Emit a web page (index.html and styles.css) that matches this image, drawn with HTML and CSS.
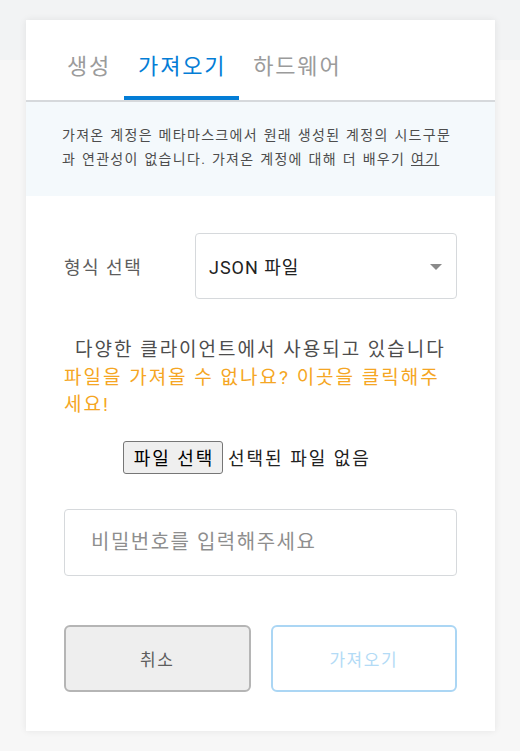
FILE: index.html
```html
<!DOCTYPE html>
<html lang="ko">
<head>
<meta charset="utf-8">
<title>계정 가져오기</title>
<link rel="stylesheet" href="styles.css">
</head>
<body>
<main class="card">
  <nav class="tabs">
    <div class="tab">생성</div>
    <div class="tab tab-active">가져오기</div>
    <div class="tab">하드웨어</div>
  </nav>
  <div class="notice">가져온 계정은 메타마스크에서 원래 생성된 계정의 시드구문과 연관성이 없습니다. 가져온 계정에 대해 더 배우기 <a class="notice-link" href="#">여기</a></div>
  <div class="form">
    <div class="select-row">
      <span class="select-label">형식 선택</span>
      <div class="select">
        <span class="select-value">JSON 파일</span>
        <span class="select-arrow"></span>
      </div>
    </div>
    <p class="info"><span class="info-text">다양한 클라이언트에서 사용되고 있습니다</span> <a class="info-link" href="#">파일을 가져올 수 없나요? 이곳을 클릭해주세요!</a></p>
    <div class="file-row">
      <button class="file-btn" type="button">파일 선택</button>
      <span class="file-name">선택된 파일 없음</span>
    </div>
    <input class="password" type="password" placeholder="비밀번호를 입력해주세요">
    <div class="actions">
      <button class="btn btn-cancel" type="button">취소</button>
      <button class="btn btn-import" type="button">가져오기</button>
    </div>
  </div>
</main>
</body>
</html>
```
FILE: styles.css
```css
html, body {
  margin: 0;
  padding: 0;
}
body {
  background: linear-gradient(#f2f3f4 0, #f2f3f4 60px, #f7f7f7 60px);
  min-height: 751px;
  font-family: Roboto, "Noto Sans CJK KR", sans-serif;
  padding-top: 20px;
  box-sizing: border-box;
}
.card {
  margin-left: 26px;
  width: 469px;
  height: 711px;
  background: #fff;
  box-shadow: 0 0 7px rgba(0, 0, 0, 0.08);
  display: flex;
  flex-direction: column;
}
.tabs {
  display: flex;
  height: 80px;
  padding-left: 27px;
  border-bottom: 2px solid #d6d9dc;
  align-items: flex-end;
}
.tab {
  padding: 0 13px 13px 14px;
  font-size: 22px;
  line-height: 32px;
  letter-spacing: 1.8px;
  color: #9b9b9b;
  border-bottom: 4px solid transparent;
}
.tab-active {
  color: #037dd6;
  border-bottom-color: #037dd6;
}
.notice {
  background: #f4f9fc;
  padding: 21px 30px 25px 36px;
  font-size: 14px;
  line-height: 24px;
  letter-spacing: 1.3px;
  word-spacing: 1px;
  color: #4d4d4d;
}
.notice-link {
  color: #4d4d4d;
}
.form {
  padding: 37px 38px 0;
  display: flex;
  flex-direction: column;
}
.select-row {
  display: flex;
  align-items: center;
}
.select-label {
  width: 131px;
  font-size: 18px;
  letter-spacing: 1.5px;
  color: #5d5d5d;
}
.select {
  flex: 1;
  height: 66px;
  box-sizing: border-box;
  border: 1px solid #d6d9dc;
  border-radius: 4px;
  display: flex;
  align-items: center;
  justify-content: space-between;
  padding: 0 14px 0 13px;
}
.select-value {
  font-size: 18px;
  letter-spacing: 1px;
  color: #222;
}
.select-arrow {
  width: 0;
  height: 0;
  border-left: 6px solid transparent;
  border-right: 6px solid transparent;
  border-top: 6px solid #8a8a8a;
  margin-top: 2px;
}
.info {
  margin: 37px 6px 0 0;
  font-size: 19px;
  line-height: 27.5px;
  letter-spacing: 2px;
  color: #4d4d4d;
  text-indent: 11px;
}
.info-link {
  color: #f5a623;
  text-decoration: none;
}
.file-row {
  display: flex;
  align-items: center;
  margin-top: 22px;
  padding-left: 59px;
  gap: 5px;
}
.file-btn {
  height: 33px;
  width: 100px;
  font-family: Roboto, "Noto Sans CJK KR", sans-serif;
  font-size: 18px;
  letter-spacing: 2px;
  color: #000;
  background: #efefef;
  border: 1px solid #767676;
  border-radius: 3px;
  padding: 0 0 0 2px;
}
.file-name {
  font-size: 18px;
  letter-spacing: 2px;
  color: #222;
}
.password {
  margin-top: 35px;
  height: 67px;
  box-sizing: border-box;
  border: 1px solid #d6d9dc;
  border-radius: 4px;
  padding: 0 26px;
  font-family: Roboto, "Noto Sans CJK KR", sans-serif;
  font-size: 20px;
  letter-spacing: 1.5px;
  outline: none;
}
.password::placeholder {
  color: #8e8e8e;
}
.actions {
  display: flex;
  gap: 20px;
  margin-top: 49px;
}
.btn {
  flex: 1;
  height: 67px;
  border-radius: 6px;
  border: 2px solid;
  font-family: Roboto, "Noto Sans CJK KR", sans-serif;
  font-size: 17px;
  letter-spacing: 1.5px;
}
.btn-cancel {
  background: #eeeeee;
  border-color: #b5b5b5;
  color: #5d5d5d;
}
.btn-import {
  background: #fff;
  border-color: #abd6f4;
  color: #b3dbf6;
}
```
